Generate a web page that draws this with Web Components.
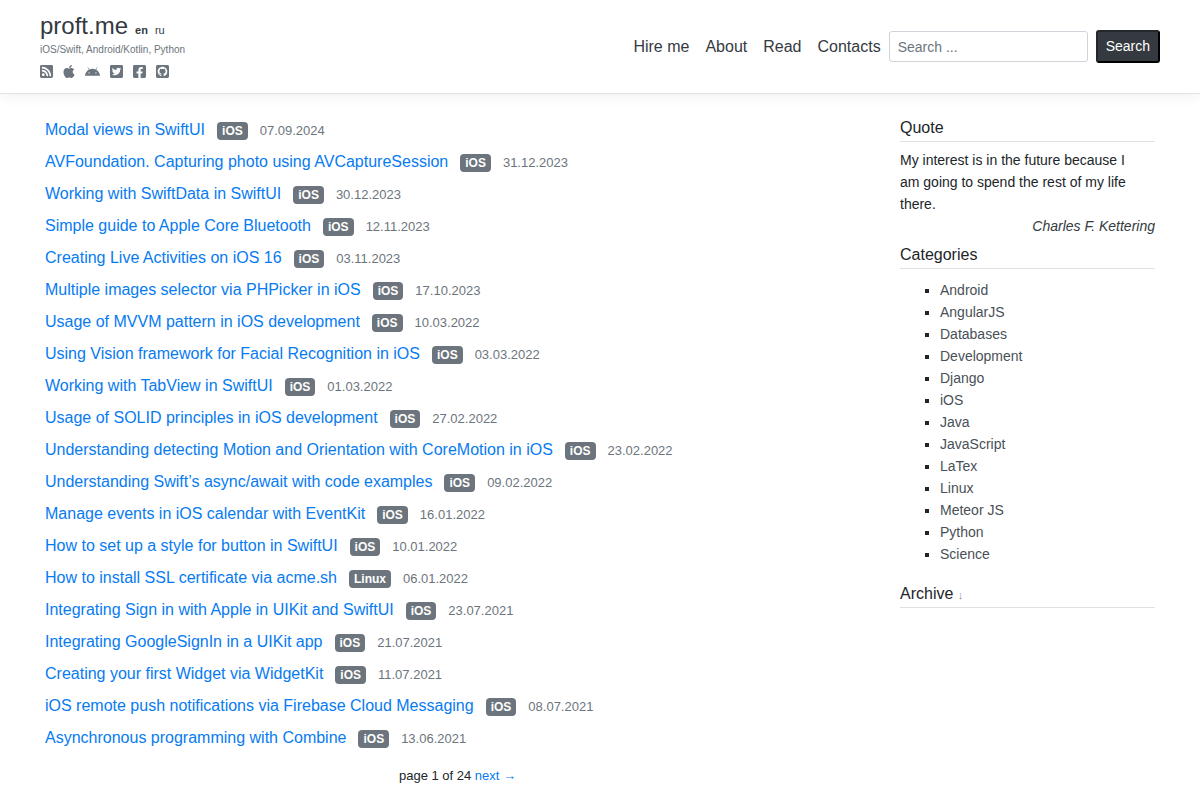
<!DOCTYPE html>
<html lang="en">
<head>
<meta charset="utf-8">
<meta name="viewport" content="width=device-width, initial-scale=1">
<title>proft.me</title>
<style>
  body {
    margin: 0;
    background: #fff;
    color: #212529;
    font: 16px/24px "Liberation Sans", Arial, sans-serif;
  }
</style>
</head>
<body>
<blog-page>
  <site-header slot="header"></site-header>
  <post-list slot="main">
    <post-item tag="iOS" date="07.09.2024">Modal views in SwiftUI</post-item>
    <post-item tag="iOS" date="31.12.2023">AVFoundation. Capturing photo using AVCaptureSession</post-item>
    <post-item tag="iOS" date="30.12.2023">Working with SwiftData in SwiftUI</post-item>
    <post-item tag="iOS" date="12.11.2023">Simple guide to Apple Core Bluetooth</post-item>
    <post-item tag="iOS" date="03.11.2023">Creating Live Activities on iOS 16</post-item>
    <post-item tag="iOS" date="17.10.2023">Multiple images selector via PHPicker in iOS</post-item>
    <post-item tag="iOS" date="10.03.2022">Usage of MVVM pattern in iOS development</post-item>
    <post-item tag="iOS" date="03.03.2022">Using Vision framework for Facial Recognition in iOS</post-item>
    <post-item tag="iOS" date="01.03.2022">Working with TabView in SwiftUI</post-item>
    <post-item tag="iOS" date="27.02.2022">Usage of SOLID principles in iOS development</post-item>
    <post-item tag="iOS" date="23.02.2022">Understanding detecting Motion and Orientation with CoreMotion in iOS</post-item>
    <post-item tag="iOS" date="09.02.2022">Understanding Swift’s async/await with code examples</post-item>
    <post-item tag="iOS" date="16.01.2022">Manage events in iOS calendar with EventKit</post-item>
    <post-item tag="iOS" date="10.01.2022">How to set up a style for button in SwiftUI</post-item>
    <post-item tag="Linux" date="06.01.2022">How to install SSL certificate via acme.sh</post-item>
    <post-item tag="iOS" date="23.07.2021">Integrating Sign in with Apple in UIKit and SwiftUI</post-item>
    <post-item tag="iOS" date="21.07.2021">Integrating GoogleSignIn in a UIKit app</post-item>
    <post-item tag="iOS" date="11.07.2021">Creating your first Widget via WidgetKit</post-item>
    <post-item tag="iOS" date="08.07.2021">iOS remote push notifications via Firebase Cloud Messaging</post-item>
    <post-item tag="iOS" date="13.06.2021">Asynchronous programming with Combine</post-item>
    <page-nav slot="pager"></page-nav>
  </post-list>
  <side-section slot="aside" heading="Quote"><quote-text author="Charles F. Kettering">My interest is in the future because I am going to spend the rest of my life there.</quote-text></side-section>
  <side-section slot="aside" heading="Categories"><category-list></category-list></side-section>
  <side-section slot="aside" heading="Archive" collapsed></side-section>
</blog-page>

<script>
const define = (name, html, setup) => customElements.define(name, class extends HTMLElement {
  constructor() {
    super();
    const template = document.createElement('template');
    template.innerHTML = html;
    this.attachShadow({ mode: 'open' }).append(template.content.cloneNode(true));
  }
  connectedCallback() {
    if (setup) setup(this, this.shadowRoot);
  }
});

define('blog-page', `
  <style>
    :host { display: block; }
    .content {
      display: grid;
      grid-template-columns: 3fr 1fr;
      max-width: 1140px;
      margin: 0 auto;
      padding-top: 20px;
    }
    main, aside { padding: 0 15px; min-width: 0; }
    aside { padding-top: 2px; }
    @media (max-width: 800px) { .content { grid-template-columns: 1fr; } }
  </style>
  <slot name="header"></slot>
  <div class="content">
    <main><slot name="main"></slot></main>
    <aside><slot name="aside"></slot></aside>
  </div>`);

define('site-header', `
  <style>
    :host {
      display: flex;
      flex-wrap: wrap;
      align-items: center;
      justify-content: space-between;
      padding: 8px 40px 14px;
      border-bottom: 1px solid #dee2e6;
      box-shadow: 0 4px 12px rgba(0, 0, 0, .05);
    }
    .actions { display: flex; flex-wrap: wrap; align-items: center; padding-top: 6px; }
  </style>
  <site-brand></site-brand>
  <div class="actions"><main-menu></main-menu><search-form></search-form></div>`);

define('site-brand', `
  <style>
    :host { display: block; }
    .top { display: flex; align-items: baseline; gap: 7px; }
    a { color: #343a40; text-decoration: none; }
    .name { font-size: 24px; line-height: 36px; }
    .lang { font-size: 11px; line-height: 12px; }
    .current { font-weight: bold; }
    p { margin: 0; font-size: 10px; line-height: 12px; color: #6c757d; }
  </style>
  <div class="top">
    <a class="name" href="#">proft.me</a>
    <a class="lang current" href="#en">en</a>
    <a class="lang" href="#ru">ru</a>
  </div>
  <p>iOS/Swift, Android/Kotlin, Python</p>
  <social-links></social-links>`);

define('social-links', `
  <style>
    :host { display: flex; gap: 10px; padding-top: 8px; }
    a { display: block; height: 15px; color: #6c757d; }
    svg { display: block; width: 13px; height: 15px; fill: currentColor; }
    .apple { width: 12px; }
    .android { width: 15px; }
  </style>
  <a href="#rss" aria-label="RSS"><svg viewBox="0 0 448 512"><path d="M400 32H48C21.49 32 0 53.49 0 80v352c0 26.51 21.49 48 48 48h352c26.51 0 48-21.49 48-48V80c0-26.51-21.49-48-48-48zM112 416c-26.51 0-48-21.49-48-48s21.49-48 48-48 48 21.49 48 48-21.49 48-48 48zm157.533 0h-34.335c-6.011 0-11.051-4.636-11.442-10.634-5.214-80.05-69.243-143.92-149.123-149.123-5.997-.39-10.633-5.431-10.633-11.441v-34.335c0-6.535 5.468-11.777 11.994-11.425 110.546 5.974 198.997 94.536 204.964 204.964.352 6.526-4.89 11.994-11.425 11.994zm103.027 0h-34.334c-6.161 0-11.175-4.882-11.427-11.038-5.598-136.535-115.204-246.161-251.76-251.76C68.882 152.949 64 147.935 64 141.774V107.44c0-6.454 5.338-11.664 11.787-11.432 167.83 6.025 302.21 141.191 308.205 308.205.232 6.449-4.978 11.787-11.432 11.787z"/></svg></a>
  <a href="#ios" aria-label="Apple"><svg class="apple" viewBox="0 0 384 512"><path d="M318.7 268.7c-.2-36.7 16.4-64.4 50-84.8-18.8-26.9-47.2-41.7-84.7-44.6-35.5-2.8-74.3 20.7-88.5 20.7-15 0-49.4-19.7-76.4-19.7C63.3 141.2 4 184.8 4 273.5q0 39.3 14.4 81.2c12.8 36.7 59 126.7 107.2 125.2 25.2-.6 43-17.9 75.8-17.9 31.8 0 48.3 17.9 76.4 17.9 48.6-.7 90.4-82.5 102.6-119.3-65.2-30.7-61.7-90-61.7-91.9zm-56.6-164.2c27.3-32.4 24.8-61.9 24-72.5-24.1 1.4-52 16.4-67.9 34.9-17.5 19.8-27.8 44.3-25.6 71.9 26.1 2 49.9-11.4 69.5-34.3z"/></svg></a>
  <a href="#android" aria-label="Android"><svg class="android" viewBox="0 -32 576 512"><path d="M420.55 301.93a24 24 0 1 1 24-24 24 24 0 0 1-24 24m-265.1 0a24 24 0 1 1 24-24 24 24 0 0 1-24 24m273.7-144.48 47.94-83a10 10 0 1 0-17.27-10l-48.54 84.07a301.25 301.25 0 0 0-246.56 0L116.18 64.45a10 10 0 1 0-17.27 10l47.94 83C64.53 202.22 8.24 285.55 0 384H576c-8.24-98.45-64.54-181.78-146.85-226.55"/></svg></a>
  <a href="#twitter" aria-label="Twitter"><svg viewBox="0 0 448 512"><path d="M400 32H48C21.5 32 0 53.5 0 80v352c0 26.5 21.5 48 48 48h352c26.5 0 48-21.5 48-48V80c0-26.5-21.5-48-48-48zm-48.9 158.8c.2 2.8.2 5.7.2 8.5 0 86.7-66 186.6-186.6 186.6-37.2 0-71.7-10.8-100.7-29.4 5.3.6 10.4.8 15.8.8 30.7 0 58.9-10.4 81.4-28-28.8-.6-53-19.5-61.3-45.5 10.1 1.5 19.2 1.5 29.6-1.2-30-6.1-52.5-32.5-52.5-64.4v-.8c8.7 4.9 18.9 7.9 29.6 8.3a65.447 65.447 0 0 1-29.2-54.6c0-12.2 3.2-23.4 8.9-33.1 32.3 39.8 80.8 65.8 135.2 68.6-9.3-44.5 24-80.6 64-80.6 18.9 0 35.9 7.9 47.9 20.7 14.8-2.8 29-8.3 41.6-15.8-4.9 15.2-15.2 28-28.8 36.1 13.2-1.4 26-5.1 37.8-10.2-8.9 13.1-20.1 24.7-32.9 34z"/></svg></a>
  <a href="#facebook" aria-label="Facebook"><svg viewBox="0 0 448 512"><path d="M400 32H48A48 48 0 0 0 0 80v352a48 48 0 0 0 48 48h137.25V327.69h-63V256h63v-54.64c0-62.15 37-96.48 93.67-96.48 27.14 0 55.52 4.84 55.52 4.84v61h-31.27c-30.81 0-40.42 19.12-40.42 38.73V256h68.78l-11 71.69h-57.78V480H400a48 48 0 0 0 48-48V80a48 48 0 0 0-48-48z"/></svg></a>
  <a href="#github" aria-label="GitHub"><svg viewBox="0 0 448 512"><rect y="32" width="448" height="448" rx="48"/><path fill="#fff" transform="translate(58 94) scale(20.75)" d="M8 0C3.58 0 0 3.58 0 8c0 3.54 2.29 6.53 5.47 7.59.4.07.55-.17.55-.38 0-.19-.01-.82-.01-1.49-2.01.37-2.53-.49-2.69-.94-.09-.23-.48-.94-.82-1.13-.28-.15-.68-.52-.01-.53.63-.01 1.08.58 1.23.82.72 1.21 1.87.87 2.33.66.07-.52.28-.87.51-1.07-1.78-.2-3.64-.89-3.64-3.95 0-.87.31-1.59.82-2.15-.08-.2-.36-1.02.08-2.12 0 0 .67-.21 2.2.82.64-.18 1.32-.27 2-.27s1.36.09 2 .27c1.53-1.04 2.2-.82 2.2-.82.44 1.1.16 1.92.08 2.12.51.56.82 1.27.82 2.15 0 3.07-1.87 3.75-3.65 3.95.29.25.54.73.54 1.48 0 1.07-.01 1.93-.01 2.2 0 .21.15.46.55.38A8.01 8.01 0 0 0 16 8c0-4.42-3.58-8-8-8z"/></svg></a>`);

define('main-menu', `
  <style>
    :host { display: block; }
    nav { display: flex; flex-wrap: wrap; }
    a { padding: 0 8px; color: #343a40; text-decoration: none; }
  </style>
  <nav>
    <a href="#hire">Hire me</a>
    <a href="#about">About</a>
    <a href="#read">Read</a>
    <a href="#contacts">Contacts</a>
  </nav>`);

define('search-form', `
  <style>
    :host { display: block; }
    form { display: flex; align-items: center; gap: 8px; }
    input, button { box-sizing: border-box; margin: 0; font: 14px/21px "Liberation Sans", Arial, sans-serif; }
    input {
      width: 199px;
      height: 31px;
      padding: 4px 8px;
      border: 1px solid #ced4da;
      border-radius: 3px;
      color: #495057;
      background: #fff;
    }
    input::placeholder { color: #6c757d; opacity: 1; }
    button {
      height: 33px;
      padding: 4px 8px;
      border: 2px solid;
      border-color: #23282c #000 #000 #23282c;
      border-radius: 3px;
      background: #343a40;
      color: #fff;
    }
  </style>
  <form>
    <input type="search" placeholder="Search ..." aria-label="Search">
    <button type="button">Search</button>
  </form>`);

define('post-list', `
  <style>:host { display: block; }</style>
  <slot></slot>
  <slot name="pager"></slot>`);

define('post-item', `
  <style>
    :host { display: flex; align-items: baseline; gap: 12px; line-height: 32px; }
    a { color: #077bf2; text-decoration: none; }
    .tag {
      padding: 3px 5px;
      border-radius: 4px;
      background: #6c757d;
      color: #fff;
      font-size: 12px;
      font-weight: bold;
      line-height: 12px;
    }
    time { color: #6c757d; font-size: 13px; line-height: 20px; }
  </style>
  <a href="#post"><slot></slot></a>
  <a class="tag" href="#tag"></a>
  <time></time>`, (host, root) => {
  root.querySelector('.tag').textContent = host.getAttribute('tag');
  root.querySelector('time').textContent = host.getAttribute('date');
});

define('page-nav', `
  <style>
    :host { display: block; padding: 12px 0 14px; text-align: center; font-size: 13px; line-height: 20px; }
    a { color: #077bf2; text-decoration: none; }
  </style>
  page 1 of 24 <a href="#next">next →</a>`);

define('side-section', `
  <style>
    :host { display: block; }
    h2 {
      margin: 0 0 7px;
      padding-bottom: 1px;
      border-bottom: 1px solid #dee2e6;
      font-size: 16px;
      font-weight: normal;
      line-height: 24px;
    }
    a { color: #868e96; font-size: 11px; line-height: 12px; text-decoration: none; }
  </style>
  <h2></h2>
  <slot></slot>`, (host, root) => {
  const heading = root.querySelector('h2');
  heading.textContent = host.getAttribute('heading');
  if (host.hasAttribute('collapsed')) {
    const toggle = document.createElement('a');
    toggle.href = '#archive';
    toggle.textContent = '↓';
    heading.append(' ', toggle);
  }
});

define('quote-text', `
  <style>
    :host { display: block; padding-bottom: 6px; font-size: 14px; line-height: 22px; }
    blockquote { margin: 0; padding-right: 15px; }
    cite { display: block; text-align: right; color: #343a40; }
  </style>
  <blockquote><slot></slot></blockquote>
  <cite></cite>`, (host, root) => {
  root.querySelector('cite').textContent = host.getAttribute('author');
});

define('category-list', `
  <style>
    :host { display: block; padding: 3px 0 17px; font-size: 14px; line-height: 22px; }
    ul { margin: 0; padding-left: 40px; list-style: square; }
    a { color: #495057; text-decoration: none; }
  </style>
  <ul></ul>`, (host, root) => {
  const names = ['Android', 'AngularJS', 'Databases', 'Development', 'Django', 'iOS', 'Java',
    'JavaScript', 'LaTex', 'Linux', 'Meteor JS', 'Python', 'Science'];
  root.querySelector('ul').innerHTML = names
    .map(name => `<li><a href="#${name.replace(' ', '-')}">${name}</a></li>`).join('');
});
</script>
</body>
</html>
